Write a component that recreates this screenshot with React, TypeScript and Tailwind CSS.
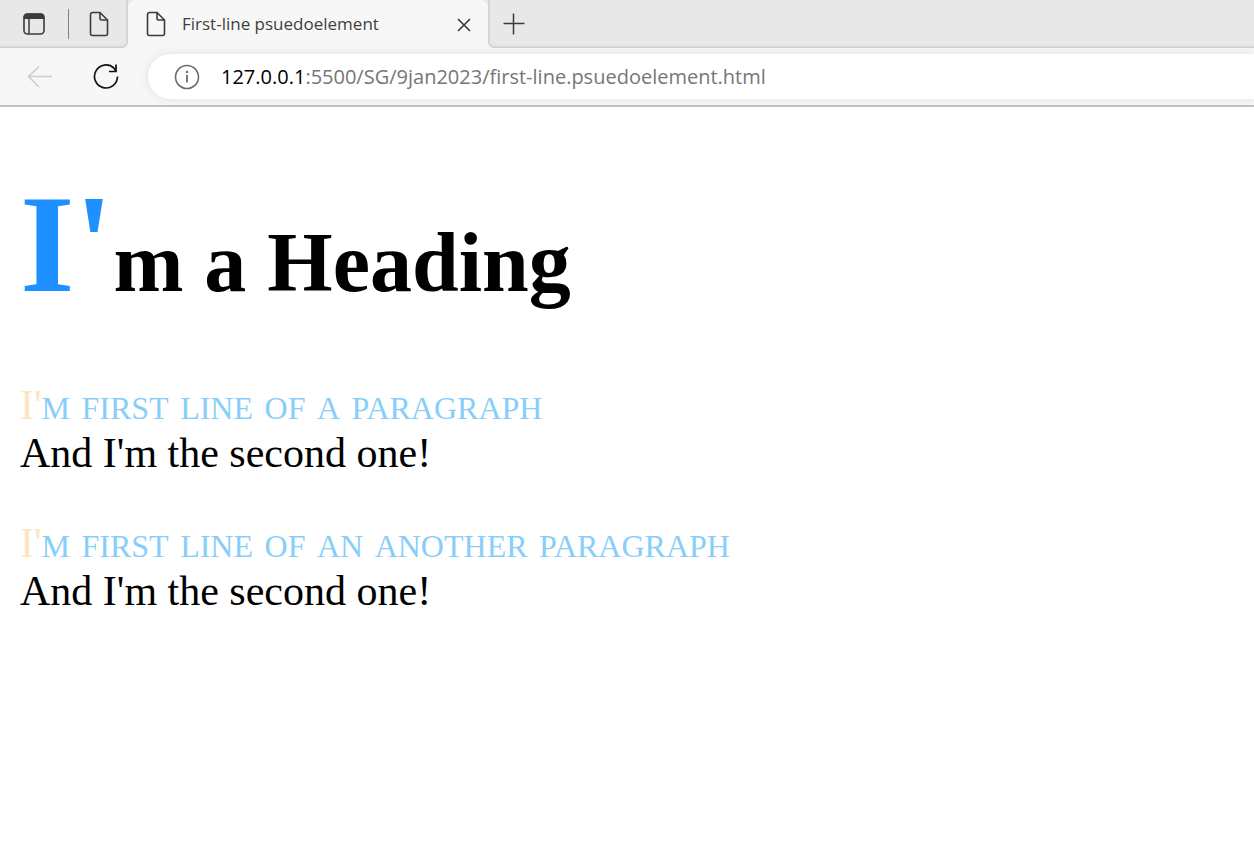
import React from "react";

function PageIcon() {
  return (
    <svg width="20" height="26" viewBox="0 0 20 26" fill="none" stroke="#3b3b3b" strokeWidth="1.6" strokeLinejoin="round" aria-hidden="true">
      <path d="M3.5 1.5H11L18.500 9V22.500A2 2 0 0 1 16.500 24.500H3.5A2 2 0 0 1 1.5 22.500V3.5A2 2 0 0 1 3.5 1.5Z" />
      <path d="M11 1.5V7.500A1.5 1.5 0 0 0 12.500 9H18.500" />
    </svg>
  );
}

function TabStrip() {
  return (
    <div className="flex h-12 bg-[#f7f7f7]">
      <div className="flex w-32 shrink-0 items-center rounded-br-md border-r border-b border-[#d0d0d0] bg-[#e8e8e8] pl-[22px] shadow-[inset_-1px_-1px_2px_#d8d8d8]">
        <button type="button" aria-label="Tab actions menu">
          <svg width="24" height="24" viewBox="0 0 24 24" fill="none" aria-hidden="true">
            <rect x="2" y="2" width="20" height="20" rx="3.500" stroke="#3b3b3b" strokeWidth="1.6" />
            <path d="M1.500 7V5A3.500 3.500 0 0 1 5 1.500H19A3.500 3.500 0 0 1 22.500 5V7Z" fill="#3b3b3b" />
            <path d="M7 7V22" stroke="#3b3b3b" strokeWidth="1.5" />
          </svg>
        </button>
        <span className="ml-[22px] h-[30px] w-px bg-[#808080]" />
        <button type="button" aria-label="Open tab" className="ml-5">
          <PageIcon />
        </button>
      </div>
      <div className="w-[360px] shrink-0 bg-linear-to-b from-[#e8e8e8] from-50% to-[#f7f7f7] to-50%">
        <div className="flex h-full items-center rounded-t-lg bg-[#f7f7f7] pr-4 pl-[18px]">
          <PageIcon />
          <span className="ml-4 flex-1 whitespace-nowrap text-[17px] leading-6 text-[#3f3f3f]">First-line psuedoelement</span>
          <button type="button" aria-label="Close tab">
            <svg width="16" height="16" viewBox="0 0 16 16" stroke="#333" strokeWidth="1.5" aria-hidden="true">
              <path d="M2 3L14 15M14 3L2 15" />
            </svg>
          </button>
        </div>
      </div>
      <div className="flex flex-1 items-center rounded-bl-md border-b border-l border-[#d0d0d0] bg-[#e8e8e8] pl-3.5 shadow-[inset_1px_-1px_2px_#d8d8d8]">
        <button type="button" aria-label="New tab">
          <svg width="22" height="22" viewBox="0 0 22 22" stroke="#3b3b3b" strokeWidth="1.5" aria-hidden="true">
            <path d="M0.500 10.500H21.500M10.500 0.500V21.500" />
          </svg>
        </button>
      </div>
    </div>
  );
}

function Toolbar() {
  return (
    <div className="flex h-[59px] items-center overflow-hidden border-b-2 border-[#c0c0c0] bg-[#f7f7f7] pl-[27px]">
      <button type="button" aria-label="Back" disabled>
        <svg width="26" height="24" viewBox="0 0 26 24" fill="none" stroke="#cecece" strokeWidth="1.6" aria-hidden="true">
          <path d="M25 11.500H1.500M12 1.500L1.500 11.500L12 22" />
        </svg>
      </button>
      <button type="button" aria-label="Refresh" className="ml-10">
        <svg width="26" height="26" viewBox="0 0 26 26" fill="none" stroke="#111" strokeWidth="1.7" aria-hidden="true">
          <path d="M24.500 12.500A11.500 11.500 0 1 1 21 4.200L23 7" />
          <path d="M23 0.500V7.500H16" />
        </svg>
      </button>
      <div className="ml-[29px] flex h-[45px] flex-1 items-center rounded-l-full bg-white pl-[26px] shadow-[0_0_8px_#dedede]">
        <button type="button" aria-label="View site information">
          <svg width="26" height="26" viewBox="0 0 26 26" fill="none" stroke="#6b6b6b" strokeWidth="1.6" aria-hidden="true">
            <circle cx="13" cy="13" r="11.500" />
            <path d="M13 11V18.500" strokeWidth="1.8" />
            <circle cx="13" cy="7.900" r="1.200" fill="#6b6b6b" stroke="none" />
          </svg>
        </button>
        <a href="#top" className="ml-[21px] whitespace-nowrap text-[20px] leading-7 text-[#767676]">
          <span className="text-black">127.0.0.1</span>:5500/SG/9jan2023/first-line.psuedoelement.html
        </a>
      </div>
    </div>
  );
}

function Paragraph({ first, second }: { first: string; second: string }) {
  return (
    <p className="mb-[41px] text-[42px] leading-[48px] text-black first-line:text-[46px] first-line:text-[#87cefa] first-line:[font-variant:small-caps] first-letter:text-[42px] first-letter:text-[#ffe4c4]">
      {first}
      <br />
      {second}
    </p>
  );
}

export default function App() {
  return (
    <div id="top" className="min-h-screen bg-white font-['Open_Sans',sans-serif]">
      <header>
        <TabStrip />
        <Toolbar />
      </header>
      <main className="px-5 pt-[56px] font-['Liberation_Serif',serif]">
        <h1 className="mb-[36px] text-[84px] leading-[162px] font-bold text-black first-letter:text-[140px] first-letter:text-[#1e90ff]">
          I'm a Heading
        </h1>
        <Paragraph first="I'm first line of a paragraph" second="And I'm the second one!" />
        <Paragraph first="I'm first line of an another paragraph" second="And I'm the second one!" />
      </main>
    </div>
  );
}
